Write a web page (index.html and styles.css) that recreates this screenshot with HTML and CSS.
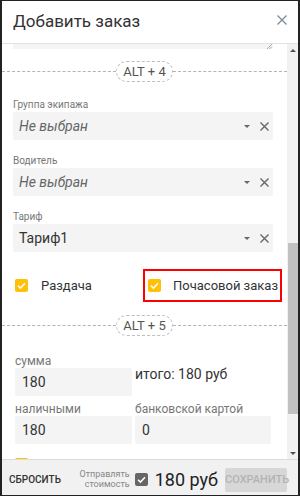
FILE: index.html
```html
<!DOCTYPE html>
<html lang="ru">
<head>
<meta charset="utf-8">
<link rel="stylesheet" href="styles.css">
</head>
<body>
<div class="dialog">
  <header class="dlg-head">
    <h1 class="title">Добавить заказ</h1>
    <svg class="close" width="10" height="10" viewBox="0 0 10 10"><path d="M0.5 0.5L9.5 9.5M9.5 0.5L0.5 9.5" stroke="#7d8e9c" stroke-width="1.4" fill="none"/></svg>
  </header>
  <div class="dlg-body">
    <div class="scroll">
      <div class="ta-stub"><svg class="grip" width="6" height="5" viewBox="0 0 6 5"><path d="M1 5L6 0M3.5 5L6 2.5" stroke="#999" stroke-width="0.8" fill="none"/></svg></div>
      <div class="divider"><span class="pill">ALT + 4</span></div>

      <div class="field first">
        <div class="label">Группа экипажа</div>
        <div class="select">
          <span class="value placeholder">Не выбран</span>
          <span class="caret"></span>
          <svg class="clear" width="9" height="9" viewBox="0 0 9 9"><path d="M0.5 0.5L8.5 8.5M8.5 0.5L0.5 8.5" stroke="#666" stroke-width="1.4" fill="none"/></svg>
        </div>
      </div>
      <div class="field">
        <div class="label">Водитель</div>
        <div class="select">
          <span class="value placeholder">Не выбран</span>
          <span class="caret"></span>
          <svg class="clear" width="9" height="9" viewBox="0 0 9 9"><path d="M0.5 0.5L8.5 8.5M8.5 0.5L0.5 8.5" stroke="#666" stroke-width="1.4" fill="none"/></svg>
        </div>
      </div>
      <div class="field">
        <div class="label">Тариф</div>
        <div class="select">
          <span class="value">Тариф1</span>
          <span class="caret"></span>
          <svg class="clear" width="9" height="9" viewBox="0 0 9 9"><path d="M0.5 0.5L8.5 8.5M8.5 0.5L0.5 8.5" stroke="#666" stroke-width="1.4" fill="none"/></svg>
        </div>
      </div>

      <div class="checks">
        <div class="check">
          <span class="box"><svg width="13" height="13" viewBox="0 0 13 13"><path d="M3 6.8L5.4 9.1L10 4.2" stroke="#fff" stroke-width="1.5" fill="none"/></svg></span>
          <span>Раздача</span>
        </div>
        <div class="check highlighted">
          <span class="box"><svg width="13" height="13" viewBox="0 0 13 13"><path d="M3 6.8L5.4 9.1L10 4.2" stroke="#fff" stroke-width="1.5" fill="none"/></svg></span>
          <span>Почасовой заказ</span>
        </div>
      </div>

      <div class="divider second"><span class="pill">ALT + 5</span></div>

      <div class="pay">
        <div class="pfield">
          <div class="plabel">сумма</div>
          <div class="input">180</div>
        </div>
        <div class="total">итого: 180 руб</div>
        <div class="pfield row2">
          <div class="plabel">наличными</div>
          <div class="input">180</div>
        </div>
        <div class="pfield row2">
          <div class="plabel">банковской картой</div>
          <div class="input">0</div>
        </div>
      </div>
      <div class="next-check"></div>
    </div>
    <div class="scrollbar">
      <div class="sb-btn"><span class="tri-up"></span></div>
      <div class="sb-track"><div class="sb-thumb"></div></div>
      <div class="sb-btn"><span class="tri-down"></span></div>
    </div>
  </div>
  <footer class="dlg-foot">
    <span class="reset">СБРОСИТЬ</span>
    <span class="send-label">Отправлять<br>стоимость</span>
    <span class="fbox"><svg width="13" height="13" viewBox="0 0 13 13"><path d="M3 6.8L5.4 9.1L10 4.2" stroke="#fff" stroke-width="1.5" fill="none"/></svg></span>
    <span class="sum">180 руб</span>
    <span class="save">СОХРАНИТЬ</span>
  </footer>
</div>
</body>
</html>
```
FILE: styles.css
```css
* { box-sizing: border-box; }
html, body { margin: 0; padding: 0; background: #fff; }
body { font-family: Roboto, "Liberation Sans", sans-serif; color: #333; }

.dialog {
  width: 300px;
  height: 496px;
  border-style: solid;
  border-color: #222;
  border-width: 1px 2px;
  display: flex;
  flex-direction: column;
  background: #fff;
  overflow: hidden;
}

.dlg-head {
  height: 43px;
  flex: none;
  border-bottom: 1px solid #e2e2e2;
  display: flex;
  align-items: flex-start;
  justify-content: space-between;
  padding: 9px 11px 0 11px;
}
.title {
  margin: 0;
  font-size: 17px;
  line-height: 22px;
  font-weight: 400;
  color: #333;
}
.close { margin-top: 5px; }

.dlg-body {
  flex: 1;
  min-height: 0;
  display: flex;
}
.scroll {
  flex: 1;
  min-width: 0;
  padding: 0 14px 0 11px;
  overflow: hidden;
}

.ta-stub {
  height: 5px;
  width: 260px;
  background: #f4f4f4;
  display: flex;
  justify-content: flex-end;
  align-items: flex-end;
  padding-right: 1px;
}

.divider {
  margin: 12px -14px 0 -11px;
  height: 21px;
  display: flex;
  align-items: center;
}
.divider::before, .divider::after {
  content: "";
  flex: 1;
  border-top: 1px dashed #b4b4b4;
}
.divider.second { margin-top: 13px; }
.pill {
  height: 21px;
  padding: 0 6px;
  border: 1px dashed #bdbdbd;
  border-radius: 11px;
  font-size: 13px;
  line-height: 19px;
  color: #555;
}

.field { margin-top: 14px; }
.field.first { margin-top: 16px; }
.label {
  font-size: 10px;
  line-height: 14px;
  color: #777;
}
.select {
  width: 260px;
  height: 28px;
  background: #f4f4f4;
  border-radius: 2px;
  display: flex;
  align-items: center;
  padding: 0 4px 0 6px;
}
.value {
  flex: 1;
  font-size: 14px;
  color: #333;
}
.value.placeholder { font-style: italic; color: #666; }
.caret {
  width: 0;
  height: 0;
  border-left: 3px solid transparent;
  border-right: 3px solid transparent;
  border-top: 3px solid #666;
  margin-right: 10px;
}

.checks {
  margin-top: 17px;
  display: grid;
  grid-template-columns: 130px 139px;
  height: 33px;
}
.check {
  display: flex;
  align-items: center;
  gap: 13px;
  font-size: 13px;
  color: #333;
  padding-left: 2px;
  white-space: nowrap;
}
.check.highlighted {
  border: 2px solid #f00;
  padding-left: 3px;
  gap: 12px;
}
.box, .fbox {
  width: 13px;
  height: 13px;
  border-radius: 2px;
  background: #ffc107;
  display: block;
  flex: none;
}
.box svg, .fbox svg { display: block; }

.pay {
  margin: 18px 0 0 2px;
  display: grid;
  grid-template-columns: 117px 136px;
  column-gap: 3px;
}
.pfield.row2 { margin-top: 6px; }
.plabel {
  font-size: 12px;
  line-height: 14px;
  color: #777;
}
.input {
  height: 28px;
  background: #f4f4f4;
  border-radius: 2px;
  padding-left: 7px;
  font-size: 14px;
  line-height: 28px;
  color: #333;
}
.total {
  padding-top: 12px;
  font-size: 14px;
  line-height: 16px;
  color: #333;
}
.next-check {
  margin: 14px 0 0 2px;
  width: 13px;
  height: 13px;
  border-radius: 2px;
  background: #ffc107;
}

.scrollbar {
  width: 11px;
  flex: none;
  background: #f1f1f1;
  display: flex;
  flex-direction: column;
}
.sb-btn {
  height: 12px;
  flex: none;
  display: flex;
  align-items: center;
  justify-content: center;
}
.tri-up, .tri-down {
  width: 0;
  height: 0;
  border-left: 3px solid transparent;
  border-right: 3px solid transparent;
}
.tri-up { border-bottom: 3px solid #505050; }
.tri-down { border-top: 3px solid #505050; }
.sb-track { flex: 1; }
.sb-thumb {
  margin: 187px 0 0 1px;
  height: 171px;
  background: #c1c1c1;
}

.dlg-foot {
  height: 36px;
  flex: none;
  border-top: 1px solid #dcdcdc;
  background: #f1f1f1;
  display: flex;
  align-items: center;
  padding: 3px 11px 0 7px;
}
.reset {
  font-size: 10px;
  font-weight: 500;
  color: #333;
}
.send-label {
  margin-left: auto;
  font-size: 9px;
  line-height: 10px;
  color: #888;
  text-align: right;
}
.fbox {
  background: #666;
  margin-left: 5px;
}
.sum {
  margin-left: 7px;
  font-size: 18px;
  color: #222;
}
.save {
  margin-left: 7px;
  width: 62px;
  height: 24px;
  margin-top: 1px;
  background: #d7d7d7;
  border-radius: 2px;
  color: #b3b3b3;
  font-size: 11px;
  font-weight: 500;
  line-height: 24px;
  text-align: center;
}
```
